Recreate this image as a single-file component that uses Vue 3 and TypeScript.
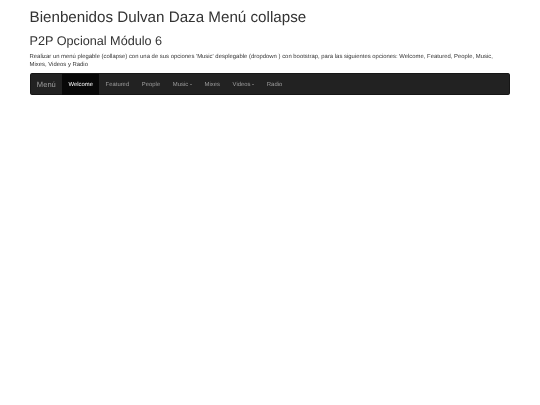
<script setup lang="ts">
interface NavItem {
  label: string
  active?: boolean
  caret?: boolean
}

const items: NavItem[] = [
  { label: 'Welcome', active: true },
  { label: 'Featured' },
  { label: 'People' },
  { label: 'Music', caret: true },
  { label: 'Mixes' },
  { label: 'Videos', caret: true },
  { label: 'Radio' },
]
</script>

<template>
  <div class="page">
    <div class="container">
      <h1>Bienbenidos Dulvan Daza Menú collapse</h1>
      <h2>P2P Opcional Módulo 6</h2>
      <p>Realizar un menú plegable (collapse) con una de sus opciones 'Music' desplegable (dropdown ) con bootstrap, para las siguientes opciones: Welcome, Featured, People, Music, Mixes, Videos y Radio</p>
      <nav class="navbar">
        <a class="brand">Menú</a>
        <ul class="nav">
          <li v-for="item in items" :key="item.label" :class="{ active: item.active }">
            <a>{{ item.label }}<span v-if="item.caret" class="caret"></span></a>
          </li>
        </ul>
      </nav>
    </div>
  </div>
</template>

<style>
html, body { margin: 0; background: #fff; }
</style>

<style scoped>
.page {
  zoom: 0.421875;
  font-family: "Liberation Sans", Arial, sans-serif;
  font-size: 14px;
  line-height: 20px;
  color: #333;
  text-rendering: geometricPrecision;
  filter: blur(0.25px);
}
.container {
  width: 1140px;
  margin: 0 auto;
  display: flow-root;
}
h1, h2 {
  font-weight: 500;
  line-height: 1.1;
  margin: 0 0 10px;
}
h1 { font-size: 36px; margin-top: 24.8px; }
h2 { font-size: 30px; margin-top: 17.6px; }
p { margin: 0 0 7.6px; max-width: 1110px; letter-spacing: 0.03px; }
.navbar {
  display: flex;
  height: 52px;
  box-sizing: border-box;
  background: #222;
  border: 1px solid #161616;
  border-radius: 4px;
  margin-bottom: 20px;
}
.brand {
  padding: 17.4px 15px 12.6px;
  font-size: 18px;
  color: #9d9d9d;
}
.nav {
  display: flex;
  list-style: none;
  margin: 0;
  padding: 0;
}
.nav a {
  display: block;
  padding: 17.4px 15px 12.6px;
  color: #9d9d9d;
}
.nav .active a {
  color: #fff;
  background: #080808;
}
.caret {
  display: inline-block;
  width: 0;
  height: 0;
  margin-left: 4px;
  vertical-align: middle;
  border-top: 4px solid;
  border-right: 4px solid transparent;
  border-left: 4px solid transparent;
}
</style>
